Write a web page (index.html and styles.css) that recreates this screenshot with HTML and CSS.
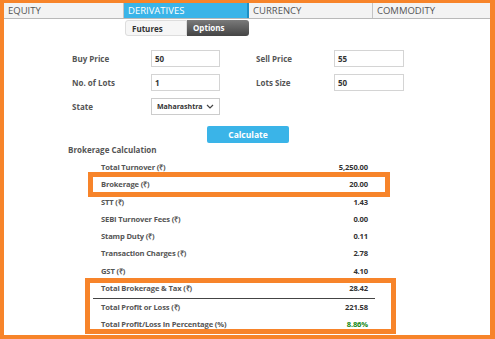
FILE: index.html
```html
<!DOCTYPE html>
<html>
<head>
<meta charset="utf-8">
<link rel="stylesheet" href="styles.css">
</head>
<body>
<div class="frame">
  <div class="tabs">
    <div class="tab t1">EQUITY</div>
    <div class="tab t2 active">DERIVATIVES</div>
    <div class="tab t3">CURRENCY</div>
    <div class="tab t4">COMMODITY</div>
  </div>
  <div class="subtabs">
    <div class="sub futures">Futures</div>
    <div class="sub options">Options</div>
  </div>
  <div class="form">
    <div class="frow">
      <div class="lbl l1">Buy Price</div>
      <div class="inp">50</div>
      <div class="lbl l2">Sell Price</div>
      <div class="inp i2">55</div>
    </div>
    <div class="frow">
      <div class="lbl l1">No. of Lots</div>
      <div class="inp">1</div>
      <div class="lbl l2">Lots Size</div>
      <div class="inp i2">50</div>
    </div>
    <div class="frow">
      <div class="lbl l1">State</div>
      <div class="inp sel">Maharashtra <svg class="chev" width="8" height="5" viewBox="0 0 8 5"><path d="M1 1 L4 4 L7 1" fill="none" stroke="#444" stroke-width="1.2"/></svg></div>
    </div>
  </div>
  <div class="btnrow"><div class="btn">Calculate</div></div>
  <div class="heading">Brokerage Calculation</div>
  <div class="results">
    <div class="row"><span>Total Turnover (₹)</span><span>5,250.00</span></div>
    <div class="row"><span>Brokerage (₹)</span><span>20.00</span></div>
    <div class="row"><span>STT (₹)</span><span>1.43</span></div>
    <div class="row"><span>SEBI Turnover Fees (₹)</span><span>0.00</span></div>
    <div class="row"><span>Stamp Duty (₹)</span><span>0.11</span></div>
    <div class="row"><span>Transaction Charges (₹)</span><span>2.78</span></div>
    <div class="row"><span>GST (₹)</span><span>4.10</span></div>
    <div class="row total"><span>Total Brokerage &amp; Tax (₹)</span><span>28.42</span></div>
    <div class="row r9"><span>Total Profit or Loss (₹)</span><span>221.58</span></div>
    <div class="row r10"><span>Total Profit/Loss In Percentage (%)</span><span class="green">8.86%</span></div>
    <div class="hl hl1"></div>
    <div class="hl hl2"></div>
  </div>
</div>
</body>
</html>
```
FILE: styles.css
```css
* { box-sizing: border-box; }
html, body { margin: 0; padding: 0; background: #fff; }
body { font-family: "Open Sans", "Liberation Sans", sans-serif; color: #555; }
.frame {
  width: 495px; height: 339px;
  border-style: solid; border-color: #f7842a;
  border-width: 3px 5px 4px 4px;
  position: relative;
  overflow: hidden;
}
.tabs {
  display: flex; height: 16px;
  border-bottom: 1px solid #b9b9b9;
}
.tab {
  font-size: 9.5px; line-height: 15px; padding-left: 4px;
  background: #f3f3f3; color: #555;
  border-right: 1px solid #c4c4c4;
}
.t1 { width: 120px; }
.t2 { width: 125px; }
.t3 { width: 124px; }
.t4 { flex: 1; border-right: none; }
.tab.active { background: #3ab4e8; color: #fff; border-right: 2px solid #1e8fc4; }
.subtabs { display: flex; margin-left: 121px; margin-top: 1px; height: 16px; }
.sub { font-size: 8px; font-weight: 700; line-height: 15px; padding-left: 6px; width: 62px; }
.futures { background: #f6f6f6; border: 1px solid #ddd; border-radius: 3px 0 0 3px; color: #333; }
.options { background: linear-gradient(#7a7a7a, #444); color: #fff; border-radius: 0 3px 3px 0; }
.form { margin-top: 14px; padding-left: 68px; display: flex; flex-direction: column; gap: 7px; }
.frow { display: flex; align-items: center; height: 17px; }
.lbl { font-size: 8px; font-weight: 700; color: #555; }
.l1 { width: 79px; }
.l2 { width: 78px; margin-left: 36px; }
.inp {
  width: 69px; height: 17px; border: 1px solid #d4d4d4;
  font-size: 8px; font-weight: 700; color: #333; line-height: 15px; padding-left: 3px;
}
.i2 { width: 70px; }
.sel {
  display: flex; align-items: center; justify-content: space-between;
  padding-left: 5px; padding-right: 5px; border-color: #ccc; font-size: 7px;
}
.chev { display: block; }
.btnrow { margin-top: 11px; padding-left: 203px; }
.btn {
  width: 82px; height: 17px; background: #3ab4e8; color: #fff;
  font-size: 8.5px; font-weight: 700; text-align: center; line-height: 17px; border-radius: 2px;
}
.heading { margin-top: 1px; padding-left: 64px; font-size: 8px; font-weight: 700; color: #555; line-height: 12px; }
.results { position: relative; margin-top: 3px; padding-left: 97px; width: 364px; }
.row {
  display: flex; justify-content: space-between; height: 17.3px; line-height: 17px;
  font-size: 7.6px; font-weight: 700; color: #555; letter-spacing: -0.15px;
}
.row span:last-child { color: #333; }
.row .green { color: #168a16 !important; }
.row.total { border-bottom: 1.5px solid #444; margin-right: -7px; padding-right: 7px; margin-left: -8px; padding-left: 8px; height: 19px; }
.row.r9 { height: 17px; }
.row.r10 { height: 16px; }
.hl { position: absolute; border: 5px solid #f7842a; }
.hl1 { left: 84px; top: 13px; width: 302px; height: 25px; }
.hl2 { left: 81px; top: 119px; width: 311px; height: 56px; }
```
